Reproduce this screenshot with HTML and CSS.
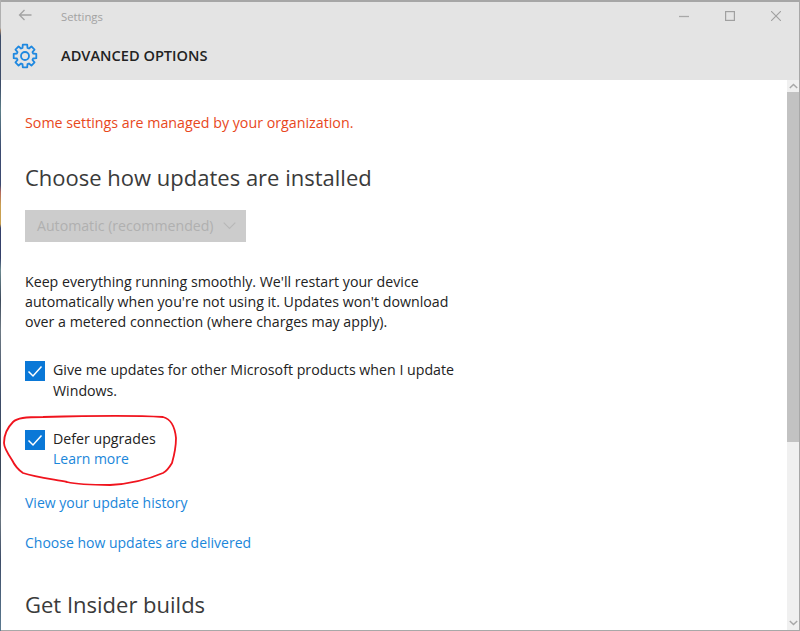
FILE: index.html
```html
<!DOCTYPE html>
<html lang="en">
<head>
<meta charset="utf-8">
<title>Settings</title>
<link rel="stylesheet" href="styles.css">
</head>
<body>
<div class="window">
  <header class="header">
    <div class="titlebar">
      <svg class="back" width="14" height="12" viewBox="0 0 14 12"><path d="M13.500 6H1.500M6.500 1L1.500 6l5 5" fill="none" stroke="#a3a3a3" stroke-width="1.300"/></svg>
      <span class="apptitle">Settings</span>
      <div class="controls">
        <svg width="10" height="10" viewBox="0 0 10 10"><path d="M0 5.500h10" stroke="#a8a8a8" stroke-width="1.300"/></svg>
        <svg width="10" height="10" viewBox="0 0 10 10"><rect x=".6" y=".6" width="8.800" height="8.800" fill="none" stroke="#a0a0a0" stroke-width="1.200"/></svg>
        <svg width="10" height="10" viewBox="0 0 10 10"><path d="M0 0l10 10M10 0L0 10" stroke="#a0a0a0" stroke-width="1.100"/></svg>
      </div>
    </div>
    <div class="pagebar">
      <svg class="gear" width="26" height="26" viewBox="-13 -13 26 26">
        <polygon points="-2.500,-8.100 -2.200,-11.300 2.200,-11.300 2.500,-8.100 3.960,-7.490 6.430,-9.550 9.550,-6.430 7.490,-3.960 8.100,-2.500 11.300,-2.200 11.300,2.200 8.100,2.500 7.490,3.960 9.550,6.430 6.430,9.550 3.960,7.490 2.500,8.100 2.200,11.300 -2.200,11.300 -2.500,8.100 -3.960,7.490 -6.430,9.550 -9.550,6.430 -7.490,3.960 -8.100,2.500 -11.300,2.200 -11.300,-2.200 -8.100,-2.500 -7.490,-3.960 -9.550,-6.430 -6.430,-9.550 -3.960,-7.490" fill="none" stroke="#1e88e0" stroke-width="1.800" stroke-linejoin="round"/>
        <circle r="4" fill="none" stroke="#1e88e0" stroke-width="1.800"/>
      </svg>
      <h1 class="pagetitle">ADVANCED OPTIONS</h1>
    </div>
  </header>
  <div class="body">
    <main class="content">
      <p class="managed">Some settings are managed by your organization.</p>
      <h2 class="heading">Choose how updates are installed</h2>
      <div class="select">
        <span class="selecttext">Automatic (recommended)</span>
        <svg width="13" height="8" viewBox="0 0 13 8"><path d="M.7.700l5.800 5.800L12.300.7" fill="none" stroke="#b8b8b8" stroke-width="1.200"/></svg>
      </div>
      <p class="desc">Keep everything running smoothly. We'll restart your device automatically when you're not using it. Updates won't download over a metered connection (where charges may apply).</p>
      <div class="check first">
        <span class="box"><svg width="20" height="20" viewBox="0 0 20 20"><path d="M3.500 10.500l4.500 4.500 8.500-9.500" fill="none" stroke="#fff" stroke-width="1.500"/></svg></span>
        <span class="label">Give me updates for other Microsoft products when I update Windows.</span>
      </div>
      <div class="check second">
        <span class="box"><svg width="20" height="20" viewBox="0 0 20 20"><path d="M3.500 10.500l4.500 4.500 8.500-9.500" fill="none" stroke="#fff" stroke-width="1.500"/></svg></span>
        <div class="label">Defer upgrades<a class="link" href="#">Learn more</a></div>
      </div>
      <a class="link history" href="#">View your update history</a>
      <a class="link delivered" href="#">Choose how updates are delivered</a>
      <h2 class="heading insider">Get Insider builds</h2>
    </main>
    <div class="scrollbar">
      <svg class="arrow" width="9" height="6" viewBox="0 0 9 6"><path d="M.8 5L4.500 1.500 8.200 5" fill="none" stroke="#a8a8a8" stroke-width="1.500"/></svg>
      <div class="thumb"></div>
      <svg class="arrow down" width="9" height="6" viewBox="0 0 9 6"><path d="M.8 1L4.500 4.500 8.200 1" fill="none" stroke="#a8a8a8" stroke-width="1.500"/></svg>
    </div>
  </div>
  <svg class="annotation" width="180" height="80" viewBox="0 0 180 80"><path d="M12 8C16 4 24 3 42 3C80 2 130 1 162 3C170 5 174 14 175 24C175 34 173 42 171 49C168 54 166 57 162 59C148 65 128 70 109 71C92 71 78 71 66 68C50 65 34 63 22 59C16 55 13 50 11 46C7 40 3 34 3 29C3 20 7 13 12 8Z" fill="none" stroke="#f0141e" stroke-width="1.800"/></svg>
</div>
</body>
</html>
```
FILE: styles.css
```css
* { box-sizing: border-box; }
html, body { margin: 0; height: 100%; overflow: hidden; }
body {
  padding-left: 1px;
  font-family: "Open Sans", "Noto Sans", sans-serif;
  background: linear-gradient(to bottom, #b0b0b0 0, #b0b0b0 28px, #a98a70 30px, #3d4c68 36px, #3d4c68 85px, #5d7f88 110px, #3b4a70 150px, #3b4a70 185px, #b5685c 192px, #c9a050 205px, #c9a050 224px, #34406a 228px, #34406a 258px, #6c8a90 270px, #3d4a5c 300px, #6e7a84 330px, #3d4c68 400px, #3a4658 470px, #6a7680 520px, #3d4c68 560px, #5b7a90 631px);
}
.window { position: relative; width: 799px; height: 631px; background: #fff; display: flex; flex-direction: column; border-top: 2px solid #a6a6a6; border-right: 1px solid #a8a8a8; border-bottom: 1px solid #a8a8a8; }
.header { height: 78px; flex: none; background: #e4e4e4; }
.titlebar { height: 28px; display: flex; align-items: center; padding-left: 17px; }
.back { flex: none; margin-bottom: 2px; }
.apptitle { margin-left: 29px; font-size: 11.300px; color: #a2a2a2; }
.controls { margin-left: auto; display: flex; gap: 36px; padding-right: 18px; }
.pagebar { height: 50px; display: flex; align-items: center; padding-left: 11px; }
.pagetitle { margin: 0 0 0 23px; font-size: 14.600px; font-weight: 600; color: #222; }
.gear { flex: none; margin-top: 1px; }
.body { flex: 1; min-height: 0; display: flex; }
.content { flex: 1; overflow: hidden; padding: 33px 0 0 24px; }
.managed { margin: 0; font-size: 14.250px; line-height: 20px; color: #e8481c; }
.heading { margin: 29px 0 0; font-size: 22px; line-height: 30px; font-weight: 400; color: #3a3a3a; }
.select { width: 221px; height: 32px; margin-top: 18px; padding: 0 10px 0 12px; display: flex; align-items: center; justify-content: space-between; background: #cccccc; color: #b0b0b0; font-size: 14.150px; }
.selecttext { margin-top: -2px; }
.desc { width: 430px; margin: 30px 0 0; font-size: 14.200px; line-height: 20px; color: #222; }
.check { display: flex; gap: 8px; width: 440px; font-size: 14.200px; line-height: 20.500px; color: #222; }
.first { margin-top: 28px; }
.second { margin-top: 28px; line-height: 20px; }
.box { flex: none; width: 20px; height: 20px; margin-top: 1px; background: #0a78d7; display: block; }
.box svg { display: block; }
.label { flex: 1; }
.link { display: block; color: #1a86da; text-decoration: none; font-size: 14px; line-height: 20px; }
.history { margin-top: 24px; }
.delivered { margin-top: 20px; }
.insider { margin-top: 36px; }
.scrollbar { position: relative; width: 12px; flex: none; background: #f0f0f0; display: flex; flex-direction: column; align-items: center; }
.arrow { flex: none; margin-top: 3px; }
.thumb { width: 100%; height: 350px; margin-top: 3px; background: #c2c2c2; }
.arrow.down { margin-top: auto; margin-bottom: 4px; }
.annotation { position: absolute; left: 0; top: 412px; }
```
